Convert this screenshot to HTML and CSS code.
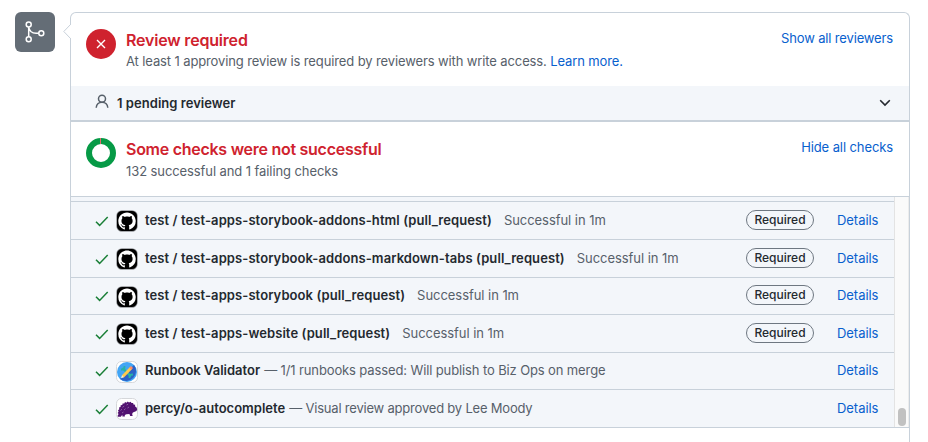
FILE: index.html
```html
<!DOCTYPE html>
<html lang="en">
<head>
<meta charset="utf-8">
<title>Merge status</title>
<link rel="stylesheet" href="styles.css">
</head>
<body>
<svg class="defs" width="0" height="0">
  <symbol id="check" viewBox="0 0 14 12"><path d="M1 6.8 4.6 10.4 12.7 1.9" fill="none" stroke="#1a7f37" stroke-width="1.5"/></symbol>
  <symbol id="octocat" viewBox="0 0 22 22">
    <rect x=".5" y=".5" width="21" height="21" rx="5.5" fill="#000" stroke="#c9cdd1" stroke-width=".6"/>
    <g transform="translate(2.3 2.4) scale(1.09)"><path fill="#fff" d="M8 0c4.42 0 8 3.58 8 8a8.013 8.013 0 0 1-5.45 7.59c-.4.08-.55-.17-.55-.38 0-.27.01-1.13.01-2.2 0-.75-.25-1.23-.54-1.48 1.78-.2 3.65-.88 3.65-3.95 0-.88-.31-1.59-.82-2.15.08-.2.36-1.02-.08-2.12 0 0-.67-.22-2.2.82-.64-.18-1.32-.27-2-.27-.68 0-1.36.09-2 .27-1.53-1.03-2.2-.82-2.2-.82-.44 1.1-.16 1.92-.08 2.12-.51.56-.82 1.28-.82 2.15 0 3.06 1.86 3.75 3.64 3.95-.23.2-.44.55-.51 1.07-.46.21-1.61.55-2.33-.66-.15-.24-.6-.83-1.23-.82-.67.01-.27.38.01.53.34.19.73.9.82 1.13.16.45.68 1.31 2.69.94 0 .67.01 1.3.01 1.49 0 .21-.15.45-.55.38A7.995 7.995 0 0 1 0 8c0-4.42 3.58-8 8-8Z"/></g>
  </symbol>
</svg>
<div class="timeline">
  <div class="merge-badge">
    <svg width="24" height="24" viewBox="0 0 24 24" fill="none" stroke="#fff" stroke-width="1.5"><circle cx="5.700" cy="4.500" r="2.500"/><circle cx="5.700" cy="19.300" r="2.500"/><circle cx="18.300" cy="13.300" r="2.500"/><path d="M5.700 7v9.800M5.700 7c.6 4 3.600 6.300 7.400 6.300h2.700"/></svg>
  </div>
  <div class="card">
    <svg class="caret" width="8" height="16" viewBox="0 0 8 16"><path d="M8 0 .8 7.500 8 15" fill="#fff" stroke="#c8d1da"/></svg>
    <section class="review">
      <div class="status-icon"><svg width="10" height="10" viewBox="0 0 10 10"><path d="m1 1 8 8m0-8-8 8" stroke="#fff" stroke-width="1.35"/></svg></div>
      <div class="summary">
        <h2 class="h-review">Review required</h2>
        <p class="sub-review">At least 1 approving review is required by reviewers with write access. <a>Learn more.</a></p>
      </div>
      <a class="toggle show">Show all reviewers</a>
    </section>
    <div class="pending">
      <svg class="person" width="14" height="15" viewBox="0 0 14 15" fill="none" stroke="#57606a" stroke-width="1.500"><circle cx="7" cy="4.700" r="3.500"/><path d="M1.200 13.800C1.400 10.200 4 8.200 7 8.200s5.600 2 5.800 5.600"/></svg>
      <span class="pending-label">1 pending reviewer</span>
      <svg class="chevron" width="12" height="8" viewBox="0 0 12 8"><path d="m1.200 1.300 4.800 4.800 4.800-4.800" fill="none" stroke="#24292f" stroke-width="1.600"/></svg>
    </div>
    <section class="checks">
      <svg class="donut" width="30" height="30" viewBox="0 0 30 30" fill="none"><circle cx="15" cy="15" r="12" stroke="#069a46" stroke-width="6"/><path d="M14.500 0v6" stroke="#e5686c" stroke-width="1"/></svg>
      <div class="summary">
        <h2 class="h-checks">Some checks were not successful</h2>
        <p class="sub-checks">132 successful and 1 failing checks</p>
      </div>
      <a class="toggle hide">Hide all checks</a>
    </section>
    <div class="scroller">
      <div class="rows">
        <div class="row"><svg class="tick"><use href="#check"/></svg><svg class="avatar"><use href="#octocat"/></svg><b class="job">test / test-apps-storybook-addons-html (pull_request)</b><span class="time">Successful in 1m</span><span class="required">Required</span><a class="details">Details</a></div>
        <div class="row"><svg class="tick"><use href="#check"/></svg><svg class="avatar"><use href="#octocat"/></svg><b class="job">test / test-apps-storybook-addons-markdown-tabs (pull_request)</b><span class="time">Successful in 1m</span><span class="required">Required</span><a class="details">Details</a></div>
        <div class="row"><svg class="tick"><use href="#check"/></svg><svg class="avatar"><use href="#octocat"/></svg><b class="job">test / test-apps-storybook (pull_request)</b><span class="time">Successful in 1m</span><span class="required">Required</span><a class="details">Details</a></div>
        <div class="row"><svg class="tick"><use href="#check"/></svg><svg class="avatar"><use href="#octocat"/></svg><b class="job">test / test-apps-website (pull_request)</b><span class="time">Successful in 1m</span><span class="required">Required</span><a class="details">Details</a></div>
        <div class="row"><svg class="tick"><use href="#check"/></svg>
          <svg class="avatar" viewBox="0 0 22 22"><rect x=".5" y=".5" width="21" height="21" rx="5" fill="#fff" stroke="#d5d7da"/><circle cx="11" cy="11" r="10" fill="#42a5f5"/><path d="M18 4a10 10 0 0 1-14 14Z" fill="#2c62c6"/><path d="m6.500 7 8.500 8.500" stroke="#27b3a5" stroke-width="2.200"/><path d="M5 8.500 8.300 8.300 8.500 5M13.500 17l.2-3.200 3.300-.3" fill="none" stroke="#27b3a5" stroke-width="1.800"/><path d="m6.800 15.500 8-8.300" stroke="#ffc94d" stroke-width="3"/><path d="m14.300 7.700 1.700-1.700" stroke="#ff8a65" stroke-width="3"/><path d="m5 17.200 1-3 2 2Z" fill="#fff3d6"/></svg>
          <b>Runbook Validator</b><span class="note">— 1/1 runbooks passed: Will publish to Biz Ops on merge</span><a class="details">Details</a></div>
        <div class="row"><svg class="tick"><use href="#check"/></svg>
          <svg class="avatar" viewBox="0 0 22 22"><rect x=".5" y=".5" width="21" height="21" rx="5" fill="#fff" stroke="#d5d7da"/><path d="M1.600 17.800 2.600 16l-1-1 1-1.300-.6-1.500 1.300-1-.3-1.600 1.600-.7V7.200l1.700-.2.300-1.600 1.700.2.700-1.500 1.500.6 1.200-1.200 1.300 1 1.600-.7.900 1.300 1.600-.2.400 1.500 1.600.4 0 1.600 1.300.8.800 2-.7 1.800-3.600 1.500-.8 1.500.6 1.900h-2.500l-.8-1.900-3 .2-1.600.7.100 1.600H6.400l-.1-1.700-1.500 1.900H1.800Z" fill="#521371"/><path d="m4.500 12.500 1.500-1.300M6.500 9.300l1.700-1.200M8 12l1.500-1.300M10.500 7l1.600-.8M11.500 10l1.500-1M6 15l1.500-1" stroke="#b493c2" stroke-width=".6"/></svg>
          <b>percy/o-autocomplete</b><span class="note review-note">— Visual review approved by Lee Moody</span><a class="details">Details</a></div>
      </div>
      <div class="track"><div class="thumb"></div></div>
    </div>
  </div>
</div>
</body>
</html>
```
FILE: styles.css
```css
* { box-sizing: border-box; }
body {
  margin: 0;
  height: 442px;
  overflow: hidden;
  background: #fff;
  color: #24292f;
  font: 13px/20px Inter, "Liberation Sans", sans-serif;
}
h2, p { margin: 0; }
svg { display: block; flex: none; }
.defs { position: absolute; }
a { color: #0860ce; }
.timeline { display: flex; gap: 15px; height: 442px; padding: 12px 18px 0 15px; }
.merge-badge {
  display: flex;
  align-items: center;
  justify-content: center;
  width: 40px;
  height: 40px;
  border-radius: 6px;
  background: #646d76;
}
.card {
  position: relative;
  width: 840px;
  height: 430px;
  border: 1px solid #c8d1da;
  border-bottom: 0;
  border-radius: 6px 6px 0 0;
}
.caret { position: absolute; left: -8px; top: 11px; }
.review, .checks { display: flex; padding: 0 16px 0 15px; }
.review { height: 73px; padding-top: 16px; }
.status-icon {
  display: flex;
  align-items: center;
  justify-content: center;
  width: 30px;
  height: 30px;
  border-radius: 50%;
  background: #cf222e;
}
.summary { flex: 1; margin-left: 10px; white-space: nowrap; }
h2 { color: #cf222e; font-size: 16px; line-height: 22px; font-weight: 600; }
p { color: #57606a; }
.h-review { letter-spacing: -.19px; }
.sub-review { letter-spacing: -.118px; }
.h-checks { letter-spacing: -.27px; }
.sub-checks { letter-spacing: -.09px; line-height: 22px; }
.toggle { white-space: nowrap; }
.show { margin-top: -1px; letter-spacing: -.15px; }
.hide { margin-top: -1px; letter-spacing: -.1px; }
.pending {
  display: flex;
  align-items: center;
  height: 36px;
  padding: 0 18px 0 24px;
  border-bottom: 2px solid #c8d1da;
  background: #f3f6fa;
}
.person { margin-top: -3px; }
.pending-label { flex: 1; margin-left: 8px; font-weight: 600; letter-spacing: .04px; }
.checks { height: 74px; padding-top: 16px; }
.scroller {
  display: flex;
  height: 232px;
  border-top: 1px solid #c8d1da;
  border-bottom: 1px solid #c8d1da;
}
.rows {
  display: grid;
  flex: 1;
  grid-template-rows: 38px 38px 37px 38px 37px 38px;
  padding-top: 4px;
  background: #f3f6fa;
}
.row {
  display: flex;
  align-items: center;
  border-top: 1px solid #c8d1da;
  padding: 0 16px 2px 24px;
  white-space: nowrap;
}
.row b { font-weight: 600; margin-left: 7px; }
.row .job { letter-spacing: .085px; }
.tick { width: 14px; height: 12px; margin-top: 2px; }
.avatar { width: 22px; height: 22px; margin-left: 7px; margin-top: 3px; }
.time { margin-left: 12px; color: #57606a; letter-spacing: -.05px; }
.note { margin-left: 4px; color: #57606a; letter-spacing: -.12px; }
.review-note { letter-spacing: -.2px; }
.required {
  margin-left: auto;
  width: 68px;
  height: 20px;
  border: 1px solid #6e7781;
  border-radius: 10px;
  font-size: 12px;
  font-weight: 500;
  line-height: 18px;
  text-align: center;
}
.details { margin-left: auto; width: 41px; letter-spacing: -.05px; }
.required + .details { margin-left: 23px; }
.track {
  width: 15px;
  padding: 211px 3px 0;
  border-left: 1px solid #e3e3e3;
  border-right: 1px solid #ececec;
  background: #fafafa;
}
.thumb { width: 8px; height: 18px; border-radius: 4px; background: #c1c1c1; }
```
